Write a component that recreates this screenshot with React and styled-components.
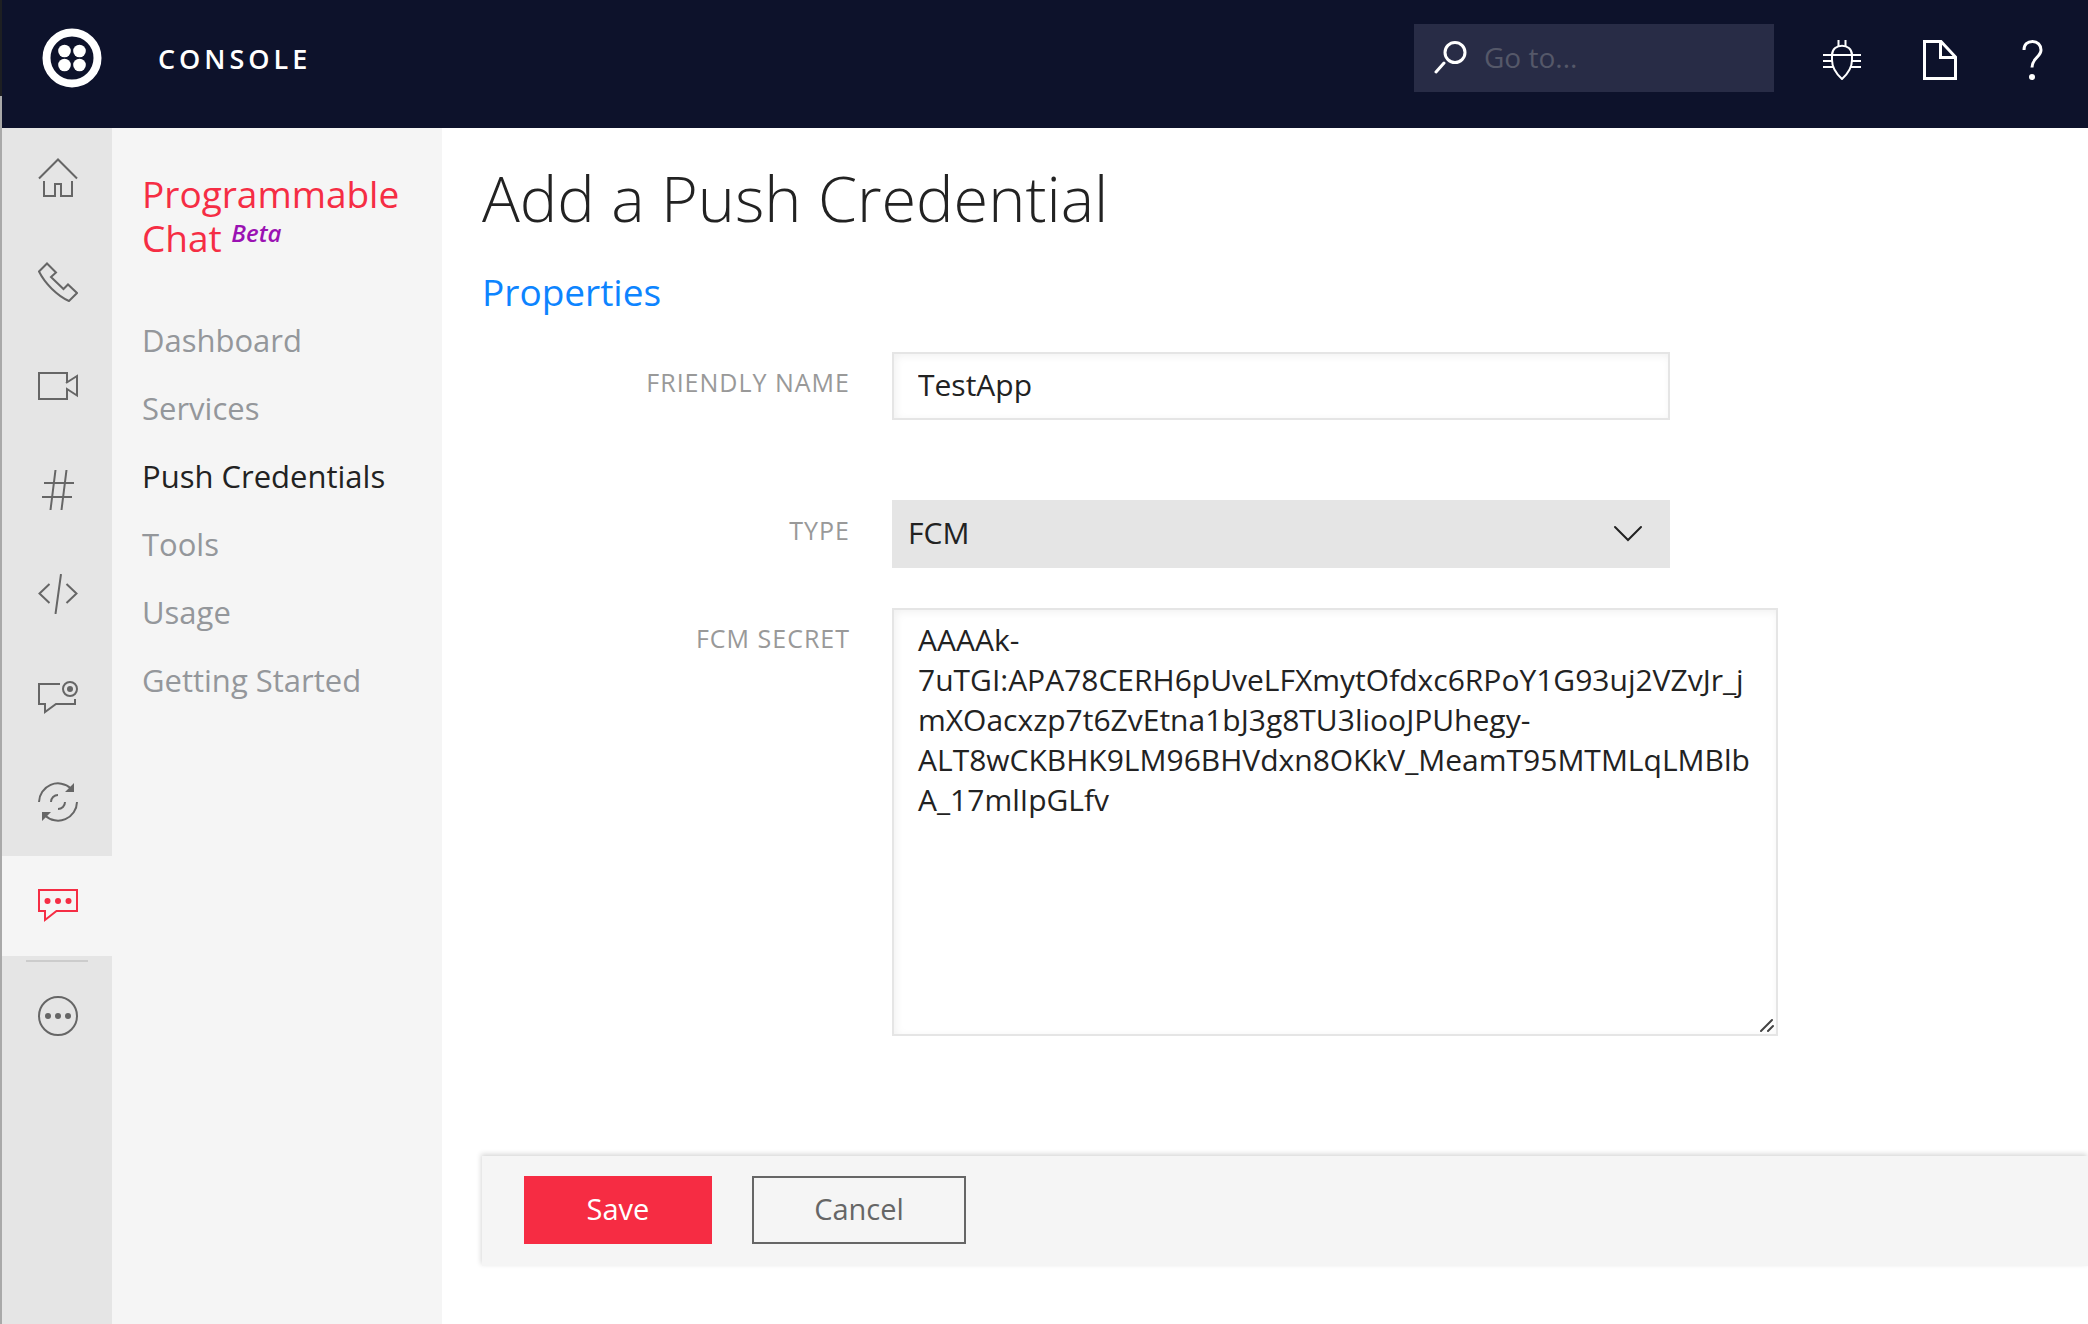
import React, { useState } from "react";
import styled, { createGlobalStyle } from "styled-components";

const GlobalStyle = createGlobalStyle`
  * {
    box-sizing: border-box;
  }
  body {
    margin: 0;
    background: #fff;
    color: #222;
    font-family: "Open Sans", "Noto Sans", sans-serif;
    font-size: 30px;
  }
  button, input, select, textarea {
    font-family: inherit;
    border-radius: 0;
    outline: none;
  }
`;

const Page = styled.div`
  min-height: 100vh;
  display: flex;
  flex-direction: column;
  padding-left: 2px;
  background: linear-gradient(#1d1f22 96px, #a9a9a9 96px) left / 2px 100%
    no-repeat;
`;

const Header = styled.header`
  display: flex;
  align-items: center;
  height: 128px;
  padding: 0 34px 12px 40px;
  background: #0d122b;
`;

const LogoLink = styled.a`
  display: flex;
`;

const ConsoleLink = styled.a`
  margin: 0 auto 0 56px;
  color: #fff;
  font-size: 27px;
  font-weight: 600;
  letter-spacing: 4px;
  text-decoration: none;
`;

const SearchBox = styled.label`
  display: flex;
  align-items: center;
  width: 360px;
  height: 68px;
  margin-right: 48px;
  padding: 0 0 2px 20px;
  background: #282c46;
  color: #fff;
`;

const SearchInput = styled.input`
  flex: 1;
  min-width: 0;
  margin-left: 16px;
  padding: 0;
  border: 0;
  background: transparent;
  color: #fff;
  font-size: 28px;

  &::placeholder {
    color: #555869;
    opacity: 1;
  }
`;

const HeaderTools = styled.div`
  display: flex;
  gap: 56px;
`;

const IconButton = styled.button`
  display: flex;
  padding: 4px 0 0;
  border: 0;
  background: none;
  color: #fff;
`;

const Body = styled.div`
  flex: 1;
  display: flex;
`;

const Rail = styled.nav`
  flex: none;
  display: flex;
  flex-direction: column;
  gap: 4px;
  width: 110px;
  background: #e5e5e5;
`;

const RailLink = styled.a`
  display: flex;
  align-items: center;
  justify-content: center;
  height: 100px;
  padding-left: 2px;
  color: ${({ $active }) => ($active ? "#f52d44" : "#666")};
  background: ${({ $active }) => ($active ? "#f5f5f5" : "transparent")};
`;

const RailDivider = styled.hr`
  width: 62px;
  height: 2px;
  margin: 0 24px;
  border: 0;
  background: #ccc;
`;

const SideMenu = styled.nav`
  flex: none;
  width: 330px;
  padding: 44px 30px;
  background: #f5f5f5;
`;

const ProductName = styled.h2`
  margin: 0 0 46px;
  color: #f52d44;
  font-size: 37px;
  font-weight: 400;
  line-height: 44px;
`;

const Beta = styled.em`
  color: #9b12b3;
  font-size: 24px;
  font-weight: 600;
  line-height: 0;
  vertical-align: 10px;
`;

const MenuLink = styled.a`
  display: block;
  line-height: 68px;
  white-space: nowrap;
  text-decoration: none;
  font-size: 31px;
  color: ${({ $active }) => ($active ? "#222" : "#94979b")};
  font-weight: ${({ $active }) => ($active ? 500 : 400)};
`;

const Main = styled.main`
  flex: 1;
  min-width: 0;
  padding: 30px 0 58px 40px;
`;

const Title = styled.h1`
  margin: 0 0 30px;
  font-size: 63px;
  font-weight: 300;
  line-height: 80px;
`;

const SectionTitle = styled.h2`
  margin: 0 0 36px;
  color: #0d84ff;
  font-size: 37px;
  font-weight: 400;
  line-height: 48px;
`;

const Field = styled.div`
  display: grid;
  grid-template-columns: 368px minmax(0, 1fr);
  column-gap: 42px;
  margin-bottom: ${({ $gap }) => $gap}px;
`;

const Label = styled.label`
  color: #999;
  font-size: 25px;
  line-height: 60px;
  letter-spacing: 1px;
  text-align: right;
  text-transform: uppercase;
`;

const TextInput = styled.input`
  width: 100%;
  max-width: 778px;
  height: 68px;
  padding: 0 24px 4px;
  border: 2px solid #e5e5e5;
  box-shadow: inset 2px 2px 8px rgba(0, 0, 0, 0.06);
  color: #222;
  font-size: 30px;
`;

const SelectWrap = styled.div`
  position: relative;
  max-width: 778px;
  color: #222;

  svg {
    position: absolute;
    top: 25px;
    right: 27px;
    pointer-events: none;
  }
`;

const Select = styled.select`
  appearance: none;
  display: block;
  width: 100%;
  height: 68px;
  padding: 0 60px 4px 16px;
  border: 0;
  background: #e5e5e5;
  color: #222;
  font-size: 30px;
`;

const TextAreaWrap = styled.div`
  position: relative;
  max-width: 886px;
  color: #444;

  svg {
    position: absolute;
    right: 4px;
    bottom: 4px;
    pointer-events: none;
  }
`;

const TextArea = styled.textarea`
  display: block;
  width: 100%;
  height: 428px;
  padding: 10px 20px 10px 24px;
  border: 2px solid #e5e5e5;
  box-shadow: inset 2px 2px 8px rgba(0, 0, 0, 0.06);
  color: #222;
  font-size: 30px;
  line-height: 40px;
  resize: none;
`;

const Actions = styled.div`
  display: flex;
  gap: 40px;
  padding: 20px 42px 22px;
  background: #f5f5f5;
  box-shadow: -1px -2px 5px rgba(0, 0, 0, 0.16);
`;

const Button = styled.button`
  width: ${({ $primary }) => ($primary ? 188 : 214)}px;
  height: 68px;
  padding: 0 0 4px;
  border: 2px solid ${({ $primary }) => ($primary ? "#f62c43" : "#666")};
  background: ${({ $primary }) => ($primary ? "#f62c43" : "transparent")};
  color: ${({ $primary }) => ($primary ? "#fff" : "#666")};
  font-size: 29px;
`;

const Icon = ({ size = 40, width = 2, children }) => (
  <svg
    width={size}
    height={size}
    viewBox={`0 0 ${size} ${size}`}
    fill="none"
    stroke="currentColor"
    strokeWidth={width}
    aria-hidden="true"
  >
    {children}
  </svg>
);

const Logo = () => (
  <svg width="60" height="60" viewBox="0 0 60 60" fill="#fff">
    <circle cx="30" cy="30" r="25.5" fill="none" stroke="#fff" strokeWidth="8" />
    <circle cx="22.5" cy="23" r="6.3" />
    <circle cx="37.5" cy="23" r="6.3" />
    <circle cx="22.5" cy="37" r="6.3" />
    <circle cx="37.5" cy="37" r="6.3" />
  </svg>
);

const railItems = [
  {
    name: "Home",
    icon: (
      <Icon>
        <path d="M1 20.5 20 1.5 39 20.5" />
        <path d="M6 23V38H17V26H23V38H34V23" />
      </Icon>
    ),
  },
  {
    name: "Phone",
    icon: (
      <Icon>
        <path d="M1 9.5 9 1.5 18 10.5 13 15 25.5 27 30 22.5 39 31 31 39C19 33.5 7 21.5 1 9.5Z" />
      </Icon>
    ),
  },
  {
    name: "Video",
    icon: (
      <Icon>
        <path d="M29 17V7H1V33H29V23L39 29.5V10L28 17" />
      </Icon>
    ),
  },
  {
    name: "Phone Numbers",
    icon: (
      <Icon>
        <path d="M17.5 0 12.5 40M28.5 0 23.5 40M6 13H36M4 27H34" />
      </Icon>
    ),
  },
  {
    name: "Code",
    icon: (
      <Icon>
        <path d="M11.5 10 1.5 19.5 11.5 29M28.5 10 38.5 19.5 28.5 29M23 0 17.5 40" />
      </Icon>
    ),
  },
  {
    name: "Notify",
    icon: (
      <Icon>
        <path d="M22 6H1V26H7V34L18 26H37V21" />
        <circle cx="32" cy="11" r="7" />
        <circle cx="32" cy="11" r="3" fill="currentColor" stroke="none" />
      </Icon>
    ),
  },
  {
    name: "Sync",
    icon: (
      <Icon>
        <path d="M1 20A19 19 0 0 1 33 6.5M39 20A19 19 0 0 1 7 33.5" />
        <path d="M13 20A7 7 0 0 1 20 13M27 20A7 7 0 0 1 20 27" />
        <path
          d="M36 1V10H27ZM4 39V30H13Z"
          fill="currentColor"
          stroke="none"
        />
      </Icon>
    ),
  },
  {
    name: "Programmable Chat",
    active: true,
    icon: (
      <Icon>
        <path d="M1 4H39V25H18.5L7 34V25H1Z" />
        <g fill="currentColor" stroke="none">
          <circle cx="9.5" cy="15" r="3" />
          <circle cx="20" cy="15" r="3" />
          <circle cx="30.5" cy="15" r="3" />
        </g>
      </Icon>
    ),
  },
];

const menuItems = [
  "Dashboard",
  "Services",
  "Push Credentials",
  "Tools",
  "Usage",
  "Getting Started",
];

const initialSecret = `AAAAk-
7uTGI:APA78CERH6pUveLFXmytOfdxc6RPoY1G93uj2VZvJr_j
mXOacxzp7t6ZvEtna1bJ3g8TU3liooJPUhegy-
ALT8wCKBHK9LM96BHVdxn8OKkV_MeamT95MTMLqLMBlb
A_17mlIpGLfv`;

const TopBar = () => (
  <Header>
    <LogoLink href="#home" aria-label="Home">
      <Logo />
    </LogoLink>
    <ConsoleLink href="#console">CONSOLE</ConsoleLink>
    <SearchBox>
      <Icon size={34} width={3}>
        <circle cx="21" cy="12.5" r="10" />
        <path d="M10 23 2 32" strokeLinecap="round" />
      </Icon>
      <SearchInput type="text" placeholder="Go to..." aria-label="Go to" />
    </SearchBox>
    <HeaderTools>
      <IconButton type="button" aria-label="Debugger">
        <Icon>
          <path d="M10 15C10 2.5 30 2.5 30 15V20C30 28 25.5 34 20 39 14.5 34 10 28 10 20Z" />
          <path d="M16.5 0V7M23.5 0V7M1 15H39M1 21H10M30 21H39M1 27H11M29 27H39" />
        </Icon>
      </IconButton>
      <IconButton type="button" aria-label="Docs">
        <Icon width={3}>
          <path d="M6.5 1.5H23L37.5 17V38.5H6.5ZM22.5 1.5V17.5H37.5" />
        </Icon>
      </IconButton>
      <IconButton type="button" aria-label="Help">
        <Icon width={3}>
          <path d="M10 10C10 4.5 13.5 1.5 18.5 1.5S27 5 27 10C27 17 18 18 18 27.5" />
          <circle cx="18" cy="37" r="3" fill="currentColor" stroke="none" />
        </Icon>
      </IconButton>
    </HeaderTools>
  </Header>
);

const App = () => {
  const [name, setName] = useState("TestApp");
  const [secret, setSecret] = useState(initialSecret);

  return (
    <>
      <GlobalStyle />
      <Page>
        <TopBar />
        <Body>
          <Rail>
            {railItems.map(({ name, icon, active }) => (
              <RailLink key={name} href="#product" aria-label={name} $active={active}>
                {icon}
              </RailLink>
            ))}
            <RailDivider />
            <RailLink href="#more" aria-label="More">
              <Icon>
                <circle cx="20" cy="20" r="19" />
                <g fill="currentColor" stroke="none">
                  <circle cx="10" cy="20" r="3" />
                  <circle cx="20" cy="20" r="3" />
                  <circle cx="30" cy="20" r="3" />
                </g>
              </Icon>
            </RailLink>
          </Rail>

          <SideMenu>
            <ProductName>
              Programmable Chat <Beta>Beta</Beta>
            </ProductName>
            {menuItems.map((item) => (
              <MenuLink
                key={item}
                href="#menu"
                $active={item === "Push Credentials"}
              >
                {item}
              </MenuLink>
            ))}
          </SideMenu>

          <Main>
            <Title>Add a Push Credential</Title>
            <SectionTitle>Properties</SectionTitle>
            <form onSubmit={(e) => e.preventDefault()}>
              <Field $gap={80}>
                <Label htmlFor="name">Friendly Name</Label>
                <TextInput
                  id="name"
                  type="text"
                  value={name}
                  onChange={(e) => setName(e.target.value)}
                />
              </Field>
              <Field $gap={40}>
                <Label htmlFor="type">Type</Label>
                <SelectWrap>
                  <Select id="type" defaultValue="FCM">
                    <option>FCM</option>
                  </Select>
                  <svg
                    width="30"
                    height="17"
                    viewBox="0 0 30 17"
                    fill="none"
                    stroke="currentColor"
                    strokeWidth="2"
                    strokeLinecap="round"
                  >
                    <path d="M2 2 15 15 28 2" />
                  </svg>
                </SelectWrap>
              </Field>
              <Field $gap={120}>
                <Label htmlFor="secret">FCM Secret</Label>
                <TextAreaWrap>
                  <TextArea
                    id="secret"
                    spellCheck="false"
                    value={secret}
                    onChange={(e) => setSecret(e.target.value)}
                  />
                  <svg
                    width="14"
                    height="14"
                    viewBox="0 0 14 14"
                    stroke="currentColor"
                    strokeWidth="2"
                    strokeLinecap="round"
                  >
                    <path d="M1 13 12 2M8 13 13 8" />
                  </svg>
                </TextAreaWrap>
              </Field>
              <Actions>
                <Button type="submit" $primary>
                  Save
                </Button>
                <Button type="button">Cancel</Button>
              </Actions>
            </form>
          </Main>
        </Body>
      </Page>
    </>
  );
};

export default App;
